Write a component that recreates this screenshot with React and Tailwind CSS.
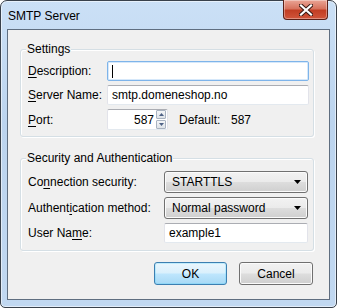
import React from "react";

const TextBox = ({ children, focused, className = "" }) => (
  <div
    className={`h-[20px] flex items-center rounded-[2px] border bg-white px-[4px] ${
      focused
        ? "border-[#7eb4ea] shadow-[inset_0_0_0_1px_#d6e8fa]"
        : "border-[#e2e3ea] border-t-[#abadb3] border-b-[#e3e9ef]"
    } ${className}`}
  >
    {children}
  </div>
);

const Combo = ({ value }) => (
  <div className="h-[22px] w-[144px] flex items-center justify-between rounded-[3px] border border-[#707070] bg-[linear-gradient(#f2f2f2_0%,#ebebeb_48%,#dddddd_52%,#cfcfcf_100%)] shadow-[inset_0_0_0_1px_#fbfbfb] pl-[7px] pr-[6px]">
    <span>{value}</span>
    <svg width="7" height="4" viewBox="0 0 7 4">
      <path d="M0 0h7L3.5 4z" fill="#000" />
    </svg>
  </div>
);

const Group = ({ title, children, className = "" }) => (
  <div className={`relative rounded-[3px] border border-[#d5dfe5] shadow-[inset_1px_1px_0_#fff,1px_1px_0_#fff] ${className}`}>
    <span className="absolute left-[5px] top-[-8px] bg-[#f0f0f0] px-[1px] leading-[14px]">{title}</span>
    {children}
  </div>
);

const U = ({ children }) => <span className="underline underline-offset-[2px]">{children}</span>;

export default function App() {
  return (
    <div className="w-[337px] h-[308px] flex flex-col rounded-t-[7px] rounded-b-[5px] border border-[#39414b] bg-[linear-gradient(#cbe0f6,#bcd4ee_40%,#c1d8f1)] shadow-[inset_0_0_0_1px_rgba(255,255,255,0.55)] font-['Liberation_Sans',Arial,sans-serif] text-[12px] text-black">
      {/* Title bar */}
      <div className="h-[28px] flex justify-between pl-[7px] pr-[8px]">
        <span className="mt-[8px] text-[12px] leading-[14px]">SMTP Server</span>
        <div className="mt-[-1px] w-[45px] h-[20px] flex items-center justify-center rounded-b-[4px] border border-t-0 border-[#5b2018] bg-[linear-gradient(#eaa596,#d7735e_45%,#c23e24_55%,#d1553b)] shadow-[inset_0_0_0_1px_rgba(255,255,255,0.35)]">
          <svg width="14" height="12" viewBox="0 0 14 12">
            <path d="M2 1.5l10 9M12 1.5l-10 9" stroke="#3a1a14" strokeWidth="4.2" strokeLinecap="square" />
            <path d="M2 1.5l10 9M12 1.5l-10 9" stroke="#fff" strokeWidth="2.2" strokeLinecap="square" />
          </svg>
        </div>
      </div>

      {/* Client area */}
      <div className="mx-[6px] h-[271px] border border-[#5f6e80] bg-[#f0f0f0] flex flex-col pt-[19px] pl-[12px] pr-[15px]">
        <Group title="Settings" className="pt-[11px] pb-[6px] pl-[7px] pr-[4px]">
          <div className="flex flex-col gap-[4px]">
            <div className="flex items-center">
              <span className="w-[79px]"><U>D</U>escription:</span>
              <TextBox focused className="w-[202px]">
                <span className="w-[1px] h-[13px] bg-black" />
              </TextBox>
            </div>
            <div className="flex items-center">
              <span className="w-[79px]"><U>S</U>erver Name:</span>
              <TextBox className="w-[202px]">smtp.domeneshop.no</TextBox>
            </div>
            <div className="flex items-center h-[21px]">
              <span className="w-[79px]"><U>P</U>ort:</span>
              <div className="h-[21px] w-[61px] flex items-center rounded-[2px] border border-[#e2e3ea] border-t-[#abadb3] border-b-[#e3e9ef] bg-white">
                <span className="flex-1 text-right pr-[2px]">587</span>
                <div className="flex flex-col gap-[1px] pr-[1px]">
                  {[0, 1].map((i) => (
                    <div key={i} className="w-[10px] h-[9px] flex items-center justify-center rounded-[1px] border border-[#a9b3c1] bg-[linear-gradient(#f4f6f8,#dde2e8)]">
                      <svg width="5" height="3" viewBox="0 0 5 3">
                        <path d={i === 0 ? "M0 3h5L2.5 0z" : "M0 0h5L2.5 3z"} fill="#4d6185" />
                      </svg>
                    </div>
                  ))}
                </div>
              </div>
              <span className="ml-[11px] w-[52px]">Default:</span>
              <span>587</span>
            </div>
          </div>
        </Group>

        <Group title="Security and Authentication" className="mt-[21px] pt-[12px] pb-[7px] pl-[7px] pr-[5px]">
          <div className="flex flex-col gap-[4px]">
            <div className="flex items-center">
              <span className="w-[136px]">Co<U>n</U>nection security:</span>
              <Combo value="STARTTLS" />
            </div>
            <div className="flex items-center">
              <span className="w-[136px]">Authent<U>i</U>cation method:</span>
              <Combo value="Normal password" />
            </div>
            <div className="flex items-center">
              <span className="w-[136px]">User Na<U>m</U>e:</span>
              <TextBox className="w-[144px]">example1</TextBox>
            </div>
          </div>
        </Group>

        <div className="mt-[11px] flex justify-end gap-[12px] pr-[1px]">
          <button className="w-[73px] h-[23px] rounded-[3px] border border-[#3c7fb1] bg-[linear-gradient(#eaf6fd_0%,#d9f0fc_48%,#bee6fd_52%,#a7d9f5_100%)] shadow-[inset_0_0_0_1px_#48d0fb40]">
            OK
          </button>
          <button className="w-[74px] h-[23px] rounded-[3px] border border-[#707070] bg-[linear-gradient(#f2f2f2_0%,#ebebeb_48%,#dddddd_52%,#cfcfcf_100%)] shadow-[inset_0_0_0_1px_#fbfbfb]">
            Cancel
          </button>
        </div>
      </div>
    </div>
  );
}
